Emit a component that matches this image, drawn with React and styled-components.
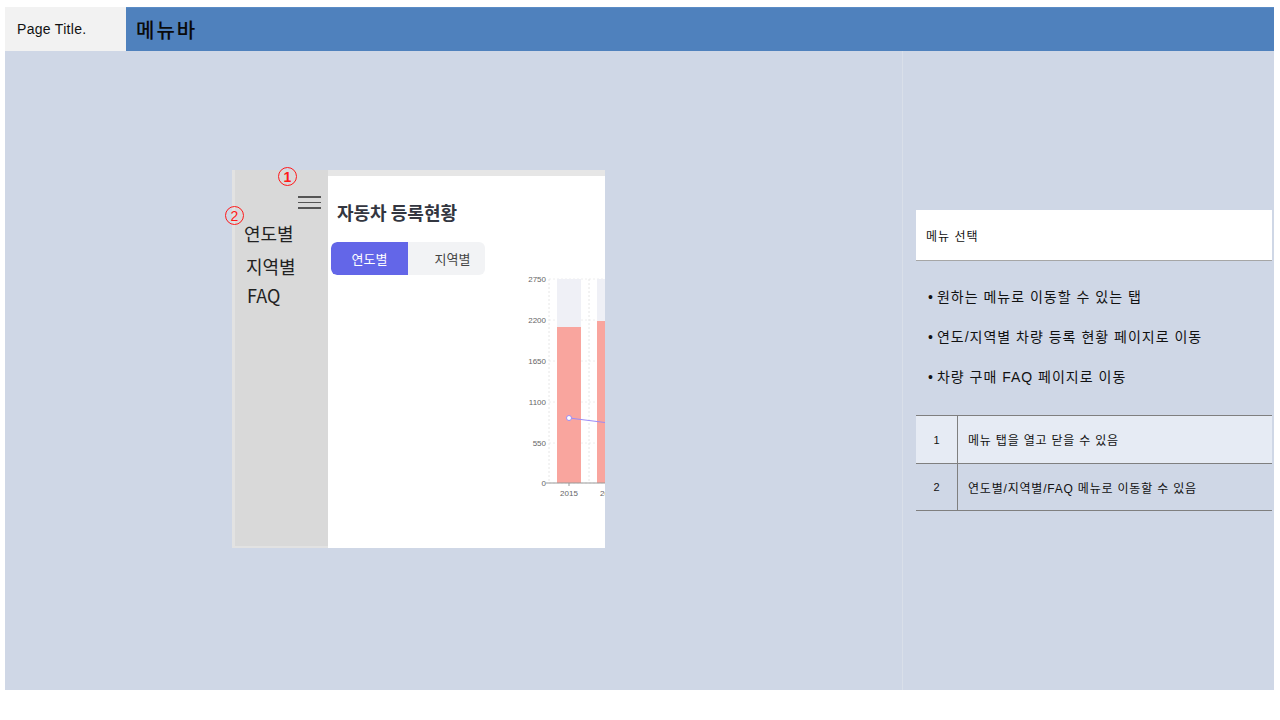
import React from "react";
import styled, { createGlobalStyle } from "styled-components";

const Global = createGlobalStyle`
  html, body { margin: 0; padding: 0; background: #ffffff; }
  body { font-family: "Liberation Sans", "Noto Sans CJK KR", sans-serif; color: #111; }
  * { box-sizing: border-box; }
`;

const Frame = styled.div`
  margin: 7px 0 0 5px;
  width: 1269px;
`;

const Header = styled.header`
  display: flex;
  height: 44px;
`;

const TitleCell = styled.div`
  width: 121px;
  background: #f2f2f2;
  display: flex;
  align-items: center;
  padding-left: 12px;
  font-size: 14px;
  letter-spacing: 0.3px;
  color: #111;
`;

const MenuBar = styled.div`
  flex: 1;
  background: #4f81bd;
  display: flex;
  align-items: center;
  padding-left: 10px;
  font-size: 20px;
  letter-spacing: 2px;
  font-weight: 500;
  color: #0a0a0a;
  border-top: 1px solid #5b8cc6;
`;

const Main = styled.main`
  display: grid;
  grid-template-columns: 897px 372px;
  height: 639px;
  background: #cfd7e6;
`;

const Stage = styled.section`
  padding: 119px 0 0 227px;
`;

const Shot = styled.div`
  position: relative;
  display: flex;
  width: 373px;
  height: 378px;
`;

const Sidebar = styled.nav`
  width: 96px;
  background: #d9d9d9;
  border-left: 3px solid #e2e2e2;
  border-bottom: 2px solid #e2e2e2;
  display: flex;
  flex-direction: column;
  font-family: "Noto Sans CJK KR", "Liberation Sans", sans-serif;
`;

const Burger = styled.div`
  align-self: flex-end;
  margin: 26px 7px 0 0;
  width: 23px;
  display: flex;
  flex-direction: column;
  gap: 4px;
  & > span {
    display: block;
    height: 1.5px;
    background: #555;
  }
`;

const SideItem = styled.div`
  font-size: 18px;
  line-height: 22px;
  color: #222;
  padding-left: ${(p) => p.$indent}px;
  margin-top: ${(p) => p.$gap}px;
`;

const Content = styled.div`
  flex: 1;
  background: #ffffff;
  border-top: 6px solid #e6e6e6;
  overflow: hidden;
  font-family: "Noto Sans CJK KR", "Liberation Sans", sans-serif;
  display: flex;
  flex-direction: column;
`;

const ShotTitle = styled.h2`
  margin: 24px 0 0 9px;
  font-size: 18px;
  line-height: 24px;
  font-weight: 700;
  color: #333640;
`;

const Tabs = styled.div`
  margin: 18px 0 0 3px;
  display: flex;
  width: 154px;
  height: 33px;
  border-radius: 6px;
  background: #f2f3f5;
  overflow: hidden;
`;

const Tab = styled.div`
  width: 77px;
  display: flex;
  align-items: center;
  justify-content: center;
  padding-left: ${(p) => (p.$active ? 0 : 12)}px;
  font-size: 13px;
  color: ${(p) => (p.$active ? "#ffffff" : "#444")};
  background: ${(p) => (p.$active ? "#6366e8" : "transparent")};
  border-radius: ${(p) => (p.$active ? "6px 0 0 6px" : "0")};
`;

const ChartBox = styled.div`
  margin: -3px 0 0 192px;
  width: 140px;
  height: 230px;
`;

const Mark = styled.span`
  position: absolute;
  left: ${(p) => p.$x}px;
  top: ${(p) => p.$y}px;
  width: ${(p) => p.$size}px;
  height: ${(p) => p.$size}px;
  border: ${(p) => p.$stroke}px solid #ff1a1a;
  border-radius: 50%;
  color: #ff1a1a;
  font-size: ${(p) => p.$font}px;
  font-weight: ${(p) => p.$weight};
  line-height: 1;
  display: flex;
  align-items: center;
  justify-content: center;
  font-family: "Liberation Sans", sans-serif;
`;

const Side = styled.aside`
  border-left: 1px solid #d9dfe9;
  padding: 159px 2px 0 13px;
`;

const InfoHead = styled.div`
  height: 51px;
  background: #ffffff;
  border-bottom: 1px solid #a6a6a6;
  display: flex;
  align-items: center;
  padding-left: 10px;
  font-size: 12px;
  letter-spacing: 1px;
  color: #111;
`;

const Bullets = styled.ul`
  list-style: none;
  margin: 16px 0 0;
  padding: 0 0 0 12px;
`;

const Bullet = styled.li`
  font-size: 14px;
  letter-spacing: 1px;
  line-height: 40px;
  color: #111;
  &::before {
    content: "•";
    margin-right: 3px;
  }
`;

const Table = styled.div`
  margin-top: 18px;
  border-top: 1px solid #7f7f7f;
`;

const Row = styled.div`
  display: grid;
  grid-template-columns: 42px 1fr;
  height: ${(p) => p.$h}px;
  background: ${(p) => (p.$shade ? "#e6ebf4" : "transparent")};
  border-bottom: 1px solid #7f7f7f;
`;

const NumCell = styled.div`
  border-right: 1px solid #7f7f7f;
  display: flex;
  align-items: center;
  justify-content: center;
  font-size: 11px;
  color: #111;
`;

const DescCell = styled.div`
  display: flex;
  align-items: center;
  padding-left: 10px;
  font-size: 12px;
  letter-spacing: 0.8px;
  color: #111;
`;

const yTicks = [
  ["2750", 7],
  ["2200", 48],
  ["1650", 89],
  ["1100", 130],
  ["550", 171],
  ["0", 211],
];

function Chart() {
  return (
    <svg width="140" height="230" viewBox="0 0 140 230">
      {yTicks.map(([t, y]) => (
        <g key={t}>
          <text x="26" y={y + 3} fontSize="8" fill="#666" textAnchor="end" fontFamily="Liberation Sans, sans-serif">
            {t}
          </text>
          <line x1="29" x2="140" y1={y} y2={y} stroke="#eeeeee" strokeDasharray="2 2" />
        </g>
      ))}
      <line x1="29" x2="29" y1="7" y2="211" stroke="#e6e6e6" strokeDasharray="2 2" />
      <line x1="69" x2="69" y1="7" y2="211" stroke="#e6e6e6" strokeDasharray="2 2" />
      <line x1="109" x2="109" y1="7" y2="211" stroke="#e6e6e6" strokeDasharray="2 2" />
      <rect x="37" y="7" width="24" height="204" fill="#eff0f6" />
      <rect x="37" y="55" width="24" height="156" fill="#f9a59e" />
      <rect x="77" y="7" width="24" height="204" fill="#eff0f6" />
      <rect x="77" y="49" width="24" height="162" fill="#f9a59e" />
      <line x1="26" x2="140" y1="211" y2="211" stroke="#999" />
      <line x1="49" x2="49" y1="211" y2="214" stroke="#999" />
      <line x1="89" x2="89" y1="211" y2="214" stroke="#999" />
      <polyline points="49,146 89,151 129,157" fill="none" stroke="#9c8cf5" strokeWidth="1.2" />
      <circle cx="49" cy="146" r="2.5" fill="#ffffff" stroke="#9c8cf5" strokeWidth="1" />
      <text x="49" y="224" fontSize="8" fill="#666" textAnchor="middle" fontFamily="Liberation Sans, sans-serif">
        2015
      </text>
      <text x="89" y="224" fontSize="8" fill="#666" textAnchor="middle" fontFamily="Liberation Sans, sans-serif">
        2016
      </text>
    </svg>
  );
}

export default function App() {
  return (
    <>
      <Global />
      <Frame>
        <Header>
          <TitleCell>Page Title.</TitleCell>
          <MenuBar>메뉴바</MenuBar>
        </Header>
        <Main>
          <Stage>
            <Shot>
              <Sidebar>
                <Burger>
                  <span />
                  <span />
                  <span />
                </Burger>
                <SideItem $indent={9} $gap={13}>연도별</SideItem>
                <SideItem $indent={11} $gap={11}>지역별</SideItem>
                <SideItem $indent={12} $gap={7}>FAQ</SideItem>
              </Sidebar>
              <Content>
                <ShotTitle>자동차 등록현황</ShotTitle>
                <Tabs>
                  <Tab $active>연도별</Tab>
                  <Tab>지역별</Tab>
                </Tabs>
                <ChartBox>
                  <Chart />
                </ChartBox>
              </Content>
              <Mark $x={46} $y={-3} $size={19} $stroke={1.6} $font={14} $weight={700}>1</Mark>
              <Mark $x={-7} $y={36} $size={19} $stroke={1} $font={14} $weight={400}>2</Mark>
            </Shot>
          </Stage>
          <Side>
            <InfoHead>메뉴 선택</InfoHead>
            <Bullets>
              <Bullet>원하는 메뉴로 이동할 수 있는 탭</Bullet>
              <Bullet>연도/지역별 차량 등록 현황 페이지로 이동</Bullet>
              <Bullet>차량 구매 FAQ 페이지로 이동</Bullet>
            </Bullets>
            <Table>
              <Row $h={48} $shade>
                <NumCell>1</NumCell>
                <DescCell>메뉴 탭을 열고 닫을 수 있음</DescCell>
              </Row>
              <Row $h={47}>
                <NumCell>2</NumCell>
                <DescCell>연도별/지역별/FAQ 메뉴로 이동할 수 있음</DescCell>
              </Row>
            </Table>
          </Side>
        </Main>
      </Frame>
    </>
  );
}
